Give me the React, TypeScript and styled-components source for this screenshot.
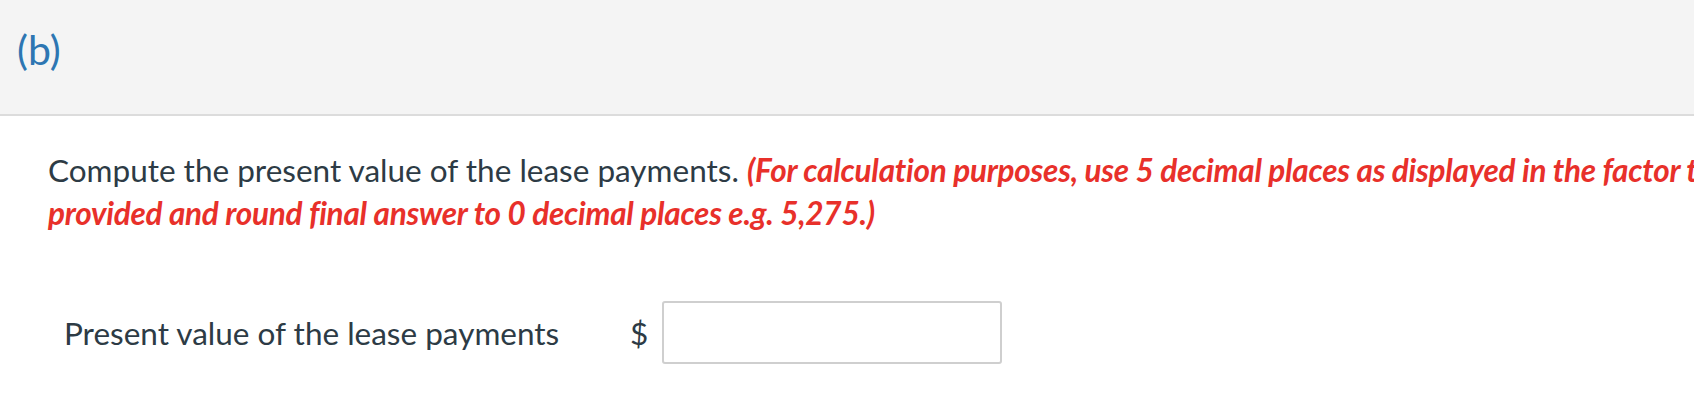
import React from "react";
import styled, {createGlobalStyle} from "styled-components";

const GlobalStyle = createGlobalStyle`
	body {
		margin: 0;
		background: #fff;
		font-family: Lato, "Liberation Sans", sans-serif;
		overflow: hidden;
	}
`

const Header = styled.div`
	height: 116px;
	box-sizing: border-box;
	padding: 26px 0 0 17px;
	background: #f4f4f4;
	border-bottom: 2px solid #dcdcdc;
`
const PartLabel = styled.h2`
	margin: 0;
	font-size: 41px;
	font-weight: 400;
	line-height: 48px;
	color: #2d76b2;
`
const Body = styled.div`
	padding: 33px 0 0 48px;
`
const Question = styled.p`
	margin: 0;
	width: 1800px;
	font-size: 31.5px;
	line-height: 43px;
	color: #2d3b45;
`
const Note = styled.em`
	font-weight: 700;
	letter-spacing: -0.25px;
	color: #e8302a;
	font-variant-ligatures: no-common-ligatures;
`
// only the fi ligature shows in the note, not the ti one
const Lig = styled.span`
	font-variant-ligatures: common-ligatures;
`
const AnswerTable = styled.div`
	display: grid;
	grid-template-columns: 566px 32px 340px;
	align-items: center;
	margin-top: 66px;
	padding-left: 16px;
`
const Label = styled.span`
	font-size: 31.5px;
	color: #2d3b45;
`
const Currency = styled.span`
	font-size: 31.5px;
	color: #2d3b45;
`
const Input = styled.input`
	box-sizing: border-box;
	width: 340px;
	height: 63px;
	border: 2px solid #cfcfcf;
	border-radius: 3px;
	outline: none;
`

const App = () => {
	return (
		<>
			<GlobalStyle />
			<Header><PartLabel>(b)</PartLabel></Header>
			<Body>
				<Question>
					Compute the present value of the lease payments.{" "}
					<Note>(For calculation purposes, use 5 decimal places as displayed in the factor tables provided and round <Lig>final</Lig> answer to 0 decimal places e.g. 5,275.)</Note>
				</Question>
				<AnswerTable>
					<Label>Present value of the lease payments</Label>
					<Currency>$</Currency>
					<Input type="text" />
				</AnswerTable>
			</Body>
		</>
	);
};

export default App;
